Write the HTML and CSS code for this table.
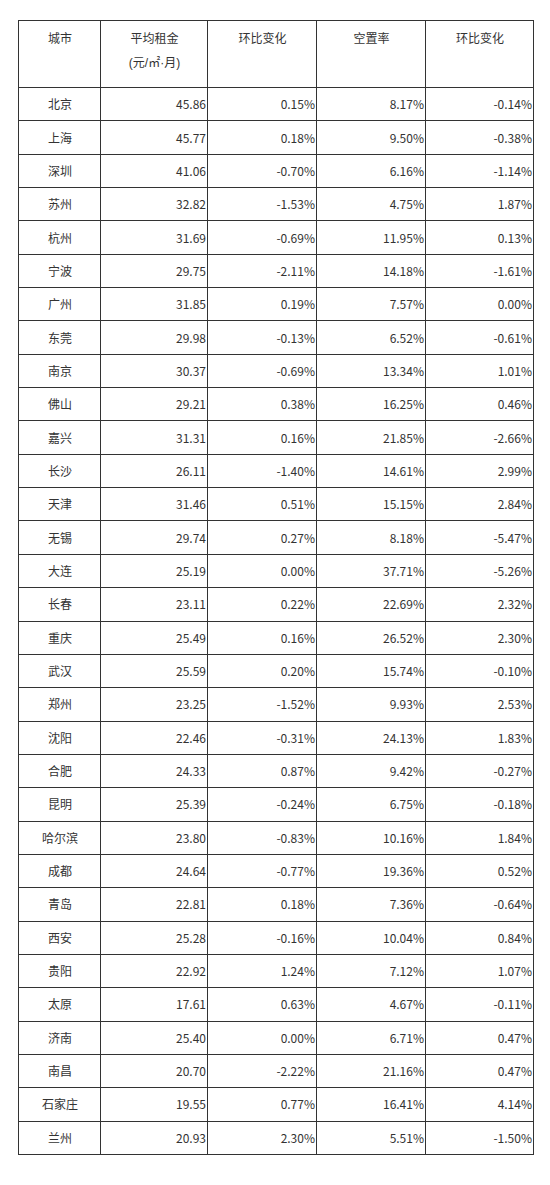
FILE: index.html
```html
<!DOCTYPE html>
<html lang="zh-CN">
<head>
<meta charset="utf-8">
<title>城市租金</title>
<link rel="stylesheet" href="styles.css">
</head>
<body>
<table class="rent">
<colgroup>
<col class="c1"><col class="c2"><col class="c3"><col class="c4"><col class="c5">
</colgroup>
<thead>
<tr><th>城市</th><th>平均租金<br><span class="unit">(元/㎡·月)</span></th><th>环比变化</th><th>空置率</th><th>环比变化</th></tr>
</thead>
<tbody>
<tr><td>北京</td><td>45.86</td><td>0.15%</td><td>8.17%</td><td>-0.14%</td></tr>
<tr><td>上海</td><td>45.77</td><td>0.18%</td><td>9.50%</td><td>-0.38%</td></tr>
<tr><td>深圳</td><td>41.06</td><td>-0.70%</td><td>6.16%</td><td>-1.14%</td></tr>
<tr><td>苏州</td><td>32.82</td><td>-1.53%</td><td>4.75%</td><td>1.87%</td></tr>
<tr><td>杭州</td><td>31.69</td><td>-0.69%</td><td>11.95%</td><td>0.13%</td></tr>
<tr><td>宁波</td><td>29.75</td><td>-2.11%</td><td>14.18%</td><td>-1.61%</td></tr>
<tr><td>广州</td><td>31.85</td><td>0.19%</td><td>7.57%</td><td>0.00%</td></tr>
<tr><td>东莞</td><td>29.98</td><td>-0.13%</td><td>6.52%</td><td>-0.61%</td></tr>
<tr><td>南京</td><td>30.37</td><td>-0.69%</td><td>13.34%</td><td>1.01%</td></tr>
<tr><td>佛山</td><td>29.21</td><td>0.38%</td><td>16.25%</td><td>0.46%</td></tr>
<tr><td>嘉兴</td><td>31.31</td><td>0.16%</td><td>21.85%</td><td>-2.66%</td></tr>
<tr><td>长沙</td><td>26.11</td><td>-1.40%</td><td>14.61%</td><td>2.99%</td></tr>
<tr><td>天津</td><td>31.46</td><td>0.51%</td><td>15.15%</td><td>2.84%</td></tr>
<tr><td>无锡</td><td>29.74</td><td>0.27%</td><td>8.18%</td><td>-5.47%</td></tr>
<tr><td>大连</td><td>25.19</td><td>0.00%</td><td>37.71%</td><td>-5.26%</td></tr>
<tr><td>长春</td><td>23.11</td><td>0.22%</td><td>22.69%</td><td>2.32%</td></tr>
<tr><td>重庆</td><td>25.49</td><td>0.16%</td><td>26.52%</td><td>2.30%</td></tr>
<tr><td>武汉</td><td>25.59</td><td>0.20%</td><td>15.74%</td><td>-0.10%</td></tr>
<tr><td>郑州</td><td>23.25</td><td>-1.52%</td><td>9.93%</td><td>2.53%</td></tr>
<tr><td>沈阳</td><td>22.46</td><td>-0.31%</td><td>24.13%</td><td>1.83%</td></tr>
<tr><td>合肥</td><td>24.33</td><td>0.87%</td><td>9.42%</td><td>-0.27%</td></tr>
<tr><td>昆明</td><td>25.39</td><td>-0.24%</td><td>6.75%</td><td>-0.18%</td></tr>
<tr><td>哈尔滨</td><td>23.80</td><td>-0.83%</td><td>10.16%</td><td>1.84%</td></tr>
<tr><td>成都</td><td>24.64</td><td>-0.77%</td><td>19.36%</td><td>0.52%</td></tr>
<tr><td>青岛</td><td>22.81</td><td>0.18%</td><td>7.36%</td><td>-0.64%</td></tr>
<tr><td>西安</td><td>25.28</td><td>-0.16%</td><td>10.04%</td><td>0.84%</td></tr>
<tr><td>贵阳</td><td>22.92</td><td>1.24%</td><td>7.12%</td><td>1.07%</td></tr>
<tr><td>太原</td><td>17.61</td><td>0.63%</td><td>4.67%</td><td>-0.11%</td></tr>
<tr><td>济南</td><td>25.40</td><td>0.00%</td><td>6.71%</td><td>0.47%</td></tr>
<tr><td>南昌</td><td>20.70</td><td>-2.22%</td><td>21.16%</td><td>0.47%</td></tr>
<tr><td>石家庄</td><td>19.55</td><td>0.77%</td><td>16.41%</td><td>4.14%</td></tr>
<tr><td>兰州</td><td>20.93</td><td>2.30%</td><td>5.51%</td><td>-1.50%</td></tr>
</tbody>
</table>
</body>
</html>
```

FILE: styles.css
```css
html, body {
  margin: 0;
  padding: 0;
  background: #ffffff;
}
body {
  padding: 20px 0 0 18px;
  font-family: "Noto Sans CJK SC", "Noto Sans", sans-serif;
  font-size: 12px;
  color: #333333;
}
.rent {
  border-collapse: collapse;
  table-layout: fixed;
  width: 515px;
}
.c1 { width: 82px; }
.c2 { width: 107px; }
.c3 { width: 109px; }
.c4 { width: 109px; }
.c5 { width: 108px; }
.rent th, .rent td {
  border: 1px solid #333333;
  padding: 0 1px 0 2px;
  font-weight: normal;
}
.rent th {
  height: 67px;
  vertical-align: top;
  text-align: center;
  line-height: 24px;
  padding-top: 5px;
  box-sizing: border-box;
}
.unit {
  font-family: "Liberation Sans", "Noto Sans CJK SC", sans-serif;
}
.rent td {
  height: 33.35px;
  text-align: right;
  vertical-align: middle;
  line-height: 16px;
  box-sizing: border-box;
}
.rent td:first-child {
  text-align: center;
}
```
